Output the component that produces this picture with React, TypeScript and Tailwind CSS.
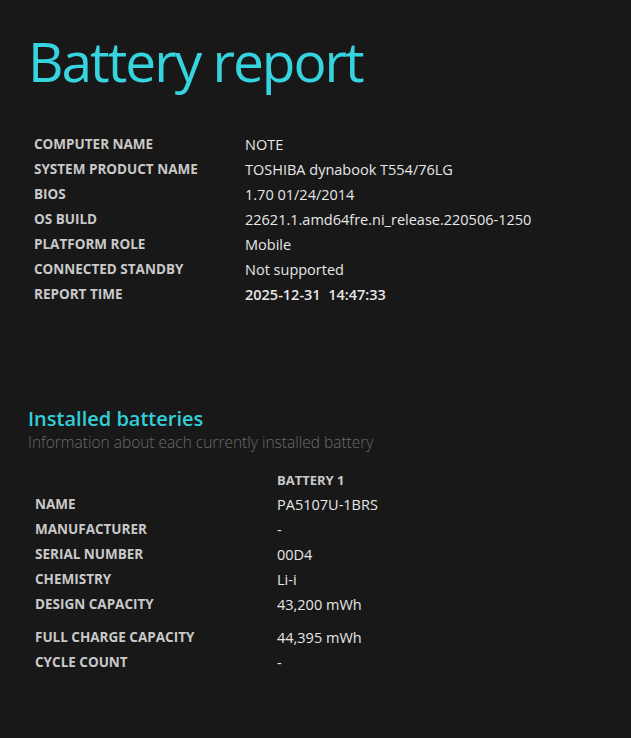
const systemInfo = [
	{ label: "COMPUTER NAME", value: "NOTE" },
	{ label: "SYSTEM PRODUCT NAME", value: "TOSHIBA dynabook T554/76LG" },
	{ label: "BIOS", value: "1.70 01/24/2014" },
	{ label: "OS BUILD", value: "22621.1.amd64fre.ni_release.220506-1250" },
	{ label: "PLATFORM ROLE", value: "Mobile" },
	{ label: "CONNECTED STANDBY", value: "Not supported" },
];

const batteryInfo = [
	{ label: "NAME", value: "PA5107U-1BRS" },
	{ label: "MANUFACTURER", value: "-" },
	{ label: "SERIAL NUMBER", value: "00D4" },
	{ label: "CHEMISTRY", value: "Li-i" },
	{ label: "DESIGN CAPACITY", value: "43,200 mWh" },
];

const font = { fontFamily: "'Open Sans', 'Noto Sans', sans-serif" };

const Row = ({
	label,
	value,
	labelWidth,
	bold,
	className = "",
}: {
	label: string;
	value: string;
	labelWidth: string;
	bold?: boolean;
	className?: string;
}) => (
	<div className={`flex h-[25px] items-center ${className}`}>
		<div
			className={`${labelWidth} shrink-0 text-[13.5px] font-bold text-[#c9c9c9]`}
		>
			{label}
		</div>
		<div
			className={`text-[14.5px] text-[#e6e6e6] ${bold ? "font-semibold" : ""}`}
		>
			{value}
		</div>
	</div>
);

export default function App() {
	return (
		<main className="min-h-screen w-full bg-[#181818]" style={font}>
			<div className="pl-[28px] pt-[28px]">
				<h1 className="text-[55px] font-normal leading-[66px] tracking-[-2px] text-[#36d4df]">
					Battery report
				</h1>
			</div>

			<section className="mt-[38px] pl-[34px]">
				{systemInfo.map((row) => (
					<Row key={row.label} {...row} labelWidth="w-[211px]" />
				))}
				<Row
					label="REPORT TIME"
					value={"2025-12-31\u00a0\u00a014:47:33"}
					labelWidth="w-[211px]"
					bold
				/>
			</section>

			<section className="mt-[99px] pl-[28px]">
				<h2 className="text-[20px] font-semibold leading-[26px] text-[#33cfd9]">
					Installed batteries
				</h2>
				<p className="text-[15.5px] font-light leading-[20px] text-[#6a6a6a]">
					Information about each currently installed battery
				</p>
			</section>

			<section className="mt-[18px] pl-[35px] pb-10">
				<div className="flex h-[22px] items-center">
					<div className="w-[242px] shrink-0" />
					<div className="text-[13px] font-bold text-[#c9c9c9]">
						BATTERY 1
					</div>
				</div>
				{batteryInfo.map((row) => (
					<Row key={row.label} {...row} labelWidth="w-[242px]" />
				))}
				<Row
					label="FULL CHARGE CAPACITY"
					value="44,395 mWh"
					labelWidth="w-[242px]"
					className="mt-[8px]"
				/>
				<Row label="CYCLE COUNT" value="-" labelWidth="w-[242px]" />
			</section>
		</main>
	);
}
